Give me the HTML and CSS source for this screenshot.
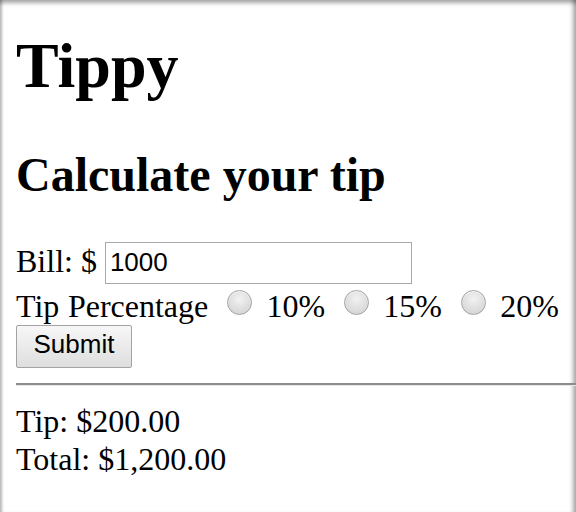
FILE: index.html
```html
<!DOCTYPE html>
<html lang="en">
<head>
<meta charset="utf-8">
<title>Tippy</title>
<link rel="stylesheet" href="styles.css">
</head>
<body>
<h1 class="title">Tippy</h1>
<h2 class="subtitle">Calculate your tip</h2>
<form class="form">
  <div class="row row-bill">Bill: $ <input class="bill" type="text" value="1000"></div>
  <div class="row row-tip">Tip Percentage <input class="radio" type="radio" name="tip" value="10"> 10% <input class="radio" type="radio" name="tip" value="15"> 15% <input class="radio" type="radio" name="tip" value="20"> 20%</div>
  <div class="row row-submit"><button class="submit" type="button">Submit</button></div>
</form>
<hr class="rule">
<div class="results">
  <div class="result">Tip: $200.00</div>
  <div class="result">Total: $1,200.00</div>
</div>
</body>
</html>
```
FILE: styles.css
```css
html {
  background: #ffffff;
}
body {
  margin: 0;
  padding: 0 0 0 16px;
  min-height: 512px;
  box-sizing: border-box;
  font-family: "Liberation Serif", "Times New Roman", serif;
  font-size: 32px;
  line-height: 1.15;
  color: #000000;
  overflow: hidden;
  box-shadow:
    inset 0 6px 4px -3px rgba(0, 0, 0, 0.35),
    inset 5px 0 3px -3px rgba(0, 0, 0, 0.28),
    inset -6px 0 4px -3px rgba(0, 0, 0, 0.35);
}
.title {
  font-size: 64px;
  font-weight: bold;
  line-height: 1.15;
  margin: 28px 0 44px;
  padding-top: 1px;
}
.subtitle {
  font-size: 48px;
  font-weight: bold;
  line-height: 1.15;
  margin: 0 0 40px;
}
.form {
  margin: 0;
}
.row {
  white-space: nowrap;
}
.row-tip {
  word-spacing: 0.6px;
}
.bill {
  box-sizing: border-box;
  width: 307px;
  height: 42px;
  margin: 0;
  padding: 0 4px;
  border: 1px solid #a9a9a9;
  font-family: "Liberation Sans", Arial, sans-serif;
  font-size: 26px;
  color: #000000;
  background: #ffffff;
  vertical-align: baseline;
  outline: none;
}
.radio {
  -webkit-appearance: none;
  appearance: none;
  box-sizing: border-box;
  width: 25px;
  height: 25px;
  margin: 6px 6px 0 10px;
  border: 1px solid #a4a4a4;
  border-radius: 50%;
  background: radial-gradient(circle at 50% 35%, #f2f2f2 0%, #dedede 55%, #cfcfcf 100%);
  box-shadow: inset 0 1px 1px rgba(255, 255, 255, 0.8);
  vertical-align: 2px;
}
.submit {
  display: block;
  box-sizing: border-box;
  width: 116px;
  height: 43px;
  margin: 0;
  padding: 0 0 3px;
  border: 1px solid #a3a3a3;
  border-radius: 2px;
  background: linear-gradient(#f7f7f7, #dedede);
  font-family: "Liberation Sans", Arial, sans-serif;
  font-size: 26px;
  color: #000000;
}
.rule {
  margin: 15px 0 16px;
  height: 0;
  border: none;
  border-top: 2px solid #8c8c8c;
  border-bottom: 1px solid #e6e6e6;
}
.results {
  padding-top: 0;
}
.result {
  line-height: 38px;
}
```
